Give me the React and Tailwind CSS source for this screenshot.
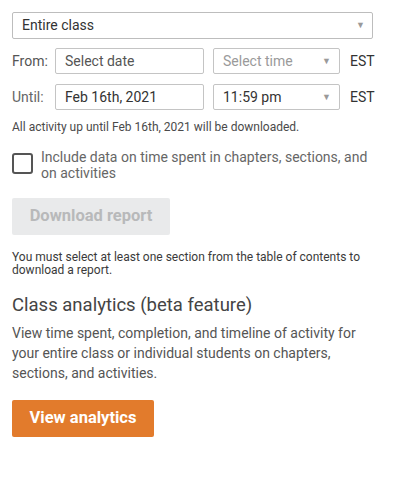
import React from "react";

function Caret() {
  return <span className="text-[9px] text-[#9a9a9a] leading-none">▼</span>;
}

function App() {
  return (
    <div className="w-[411px] h-[477px] bg-white font-['Roboto',sans-serif] text-[#333]">
      <div className="pl-[12px] pt-[12px] w-[373px]">
        <div className="h-[27px] w-[361px] border border-[#bdbdbd] rounded-[2px] flex items-center justify-between pl-[9px] pr-[7px] text-[14px] text-[#333]">
          <span>Entire class</span>
          <Caret />
        </div>

        <div className="mt-[9px] flex items-center h-[26px] w-[400px]">
          <span className="w-[43px] shrink-0 text-[14px] text-[#555]">From:</span>
          <div className="w-[149px] shrink-0 h-[26px] border border-[#c4c4c4] rounded-[2px] flex items-center pl-[9px] text-[14px] text-[#555]">
            Select date
          </div>
          <div className="ml-[9px] w-[127px] shrink-0 h-[26px] border border-[#c4c4c4] rounded-[2px] flex items-center justify-between pl-[9px] pr-[8px] text-[14px] text-[#9a9a9a]">
            <span>Select time</span>
            <Caret />
          </div>
          <span className="ml-[10px] text-[14px] text-[#333]">EST</span>
        </div>

        <div className="mt-[10px] flex items-center h-[26px] w-[400px]">
          <span className="w-[43px] shrink-0 text-[14px] text-[#666]">Until:</span>
          <div className="w-[149px] shrink-0 h-[26px] border border-[#c4c4c4] rounded-[2px] flex items-center pl-[9px] text-[14px] text-[#333]">
            Feb 16th, 2021
          </div>
          <div className="ml-[9px] w-[127px] shrink-0 h-[26px] border border-[#c4c4c4] rounded-[2px] flex items-center justify-between pl-[9px] pr-[8px] text-[14px] text-[#333]">
            <span>11:59 pm</span>
            <Caret />
          </div>
          <span className="ml-[10px] text-[14px] text-[#333]">EST</span>
        </div>

        <p className="mt-[11px] text-[12px] leading-[13px] text-[#4a4a4a]">
          All activity up until Feb 16th, 2021 will be downloaded.
        </p>

        <div className="mt-[15px] flex items-start">
          <div className="mt-[4px] w-[21px] h-[21px] border-2 border-[#555] rounded-[3px] shrink-0" />
          <p className="ml-[8px] text-[14px] leading-[16px] text-[#666]">
            Include data on time spent in chapters, sections, and on activities
          </p>
        </div>

        <button className="mt-[17px] w-[158px] h-[37px] bg-[#e9eaeb] rounded-[2px] text-[16.5px] font-bold text-[#b8b9ba]">
          Download report
        </button>

        <p className="mt-[16px] text-[12px] leading-[13px] text-[#3a3a3a]">
          You must select at least one section from the table of contents to download a report.
        </p>

        <h2 className="mt-[17px] text-[18.5px] leading-[22px] text-[#444]">Class analytics (beta feature)</h2>

        <p className="mt-[7px] text-[14px] leading-[20px] text-[#555]">
          View time spent, completion, and timeline of activity for your entire class or individual students on chapters, sections, and activities.
        </p>

        <button className="mt-[17px] w-[142px] h-[37px] bg-[#e27b2c] rounded-[2px] text-[16.5px] font-bold text-white">
          View analytics
        </button>
      </div>
    </div>
  );
}

export default App;
